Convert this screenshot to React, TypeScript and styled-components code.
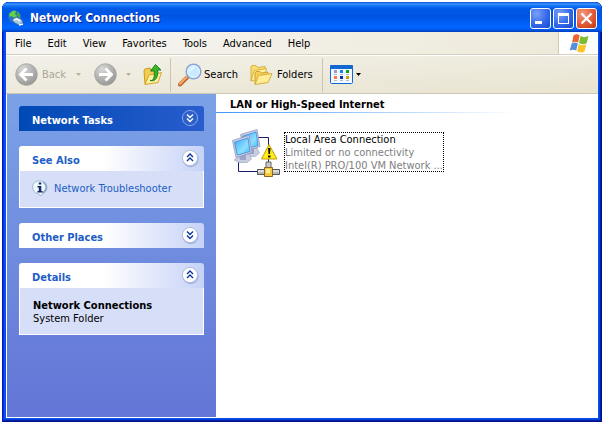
import React from "react";
import styled, { createGlobalStyle, css } from "styled-components";

const GlobalStyle = createGlobalStyle`
  * { box-sizing: border-box; }
  body {
    margin: 0;
    background: #fff;
    color: #000;
    font: 11px/13px "DejaVu Sans Condensed", "DejaVu Sans", sans-serif;
  }
  button {
    font: inherit;
    color: inherit;
    margin: 0;
    padding: 0;
    border: 0;
    background: none;
  }
  svg { display: block; flex: none; }
`;

const Page = styled.div`
  display: flex;
  min-height: 100vh;
  padding: 2px;
`;

const Window = styled.main`
  flex: 1;
  display: flex;
  flex-direction: column;
  min-width: 0;
  padding: 0 4px 4px;
  background: #0a50ee;
  border-radius: 7px 7px 0 0;
  box-shadow: inset 1px 0 #0019cf, inset -1px 0 #00138c, inset 0 -1px #00138c,
    inset 2px 0 #0831d9, inset -2px 0 #001ea0, inset 0 -2px #001ea0,
    inset -3px 0 #0441d8, inset 0 -3px #0441d8;
`;

const TitleBar = styled.header`
  display: flex;
  align-items: center;
  flex: none;
  height: 30px;
  margin: 0 -4px;
  padding: 2px 5px 0 6px;
  gap: 2px;
  border-radius: 7px 7px 0 0;
  background: linear-gradient(
    #0850d8 0, #3a94ff 2px, #1070f4 4px, #0058e6 7px, #0054e3 14px,
    #005cf4 20px, #0066ff 25px, #0060f8 27px, #0048d0 29px, #003dc0 30px
  );
`;

const WindowTitle = styled.h1`
  flex: 1;
  margin: 0 0 0 4px;
  font: bold 12px/16px "DejaVu Sans Condensed", "DejaVu Sans", sans-serif;
  color: #fff;
  text-shadow: 1px 1px #0b1f8c;
`;

const CaptionButton = styled.button<{ $close?: boolean }>`
  display: grid;
  place-items: center;
  width: 21px;
  height: 21px;
  border: 1px solid #fff;
  border-radius: 3px;
  background: ${(p) =>
    p.$close
      ? "radial-gradient(circle at 30% 25%, #f09a80, #e25a36 55%, #c03a10)"
      : "radial-gradient(circle at 30% 25%, #7ba0f8, #3468e8 55%, #1848d0)"};
`;

const Client = styled.div`
  flex: 1;
  display: flex;
  flex-direction: column;
  min-height: 0;
  background: #fff;
`;

const MenuRow = styled.div`
  display: flex;
  flex: none;
  height: 24px;
  border-bottom: 1px solid #fff;
  box-shadow: inset 0 -1px #d6d0bc;
  background: linear-gradient(90deg, #f6f5f3, #ede9d9);
`;

const MenuBar = styled.nav`
  flex: 1;
  display: flex;
  align-items: center;
  padding: 0 0 1px 9px;
  gap: 16px;
`;

const LogoCell = styled.div`
  display: grid;
  place-items: center;
  width: 40px;
  height: 22px;
  border-left: 1px solid #d0cab6;
  background: #fff;
`;

const ToolBar = styled.div`
  display: flex;
  align-items: center;
  flex: none;
  height: 38px;
  padding-left: 9px;
  border-bottom: 1px solid #cbc7b4;
  background: linear-gradient(#f0eee699, #e8e3cf99), linear-gradient(90deg, #f4f3ee, #ece6d2);
`;

const ToolButton = styled.button<{ $gap?: number; $after?: number }>`
  display: flex;
  align-items: center;
  height: 30px;
  gap: ${(p) => p.$gap ?? 4}px;
  margin-right: ${(p) => p.$after ?? 0}px;
  &:disabled { color: #aaa797; }
`;

const Separator = styled.span`
  width: 1px;
  height: 34px;
  background: #c9c5b2;
  margin-right: 7px;
`;

const Body = styled.div`
  flex: 1;
  display: flex;
  min-height: 0;
  padding: 0 0 1px 1px;
`;

const Sidebar = styled.aside`
  display: flex;
  flex-direction: column;
  flex: none;
  gap: 15px;
  width: 209px;
  padding: 12px;
  background: linear-gradient(#7ba2e7, #6375d6);
`;

const Panel = styled.section`
  display: flex;
  flex-direction: column;
`;

const PanelHeader = styled.button<{ $primary?: boolean }>`
  display: flex;
  align-items: center;
  justify-content: space-between;
  height: 25px;
  padding: 0 2px 0 13px;
  border-radius: 3px 3px 0 0;
  font-weight: bold;
  ${(p) =>
    p.$primary
      ? css`
          color: #fff;
          background: linear-gradient(90deg, #0049b5, #295dce);
        `
      : css`
          color: #215dc6;
          background: linear-gradient(90deg, #fff 45%, #c6d3f7);
        `}
`;

const PanelTitle = styled.span`
  padding-top: 3px;
`;

const PanelBody = styled.div<{ $roomy?: boolean }>`
  border: 1px solid #fff;
  border-top: 0;
  background: #d6dff7;
  padding: ${(p) => (p.$roomy ? "11px 12px 9px 13px" : "9px 12px 10px")};
`;

const TaskLink = styled.a`
  display: flex;
  align-items: center;
  gap: 6px;
  color: #215dc6;
  text-decoration: none;
  white-space: nowrap;
`;

const Strong = styled.div`
  font-weight: bold;
  white-space: nowrap;
`;

const Content = styled.section`
  flex: 1;
  min-width: 0;
`;

const GroupTitle = styled.h2`
  margin: 0;
  padding: 4px 14px 1px;
  font: inherit;
  font-weight: bold;
`;

const GroupRule = styled.div`
  height: 1px;
  max-width: 300px;
  background: linear-gradient(90deg, #3f96f8, #fff);
`;

const Connection = styled.button`
  display: flex;
  gap: 4px;
  margin: 15px 0 0 16px;
  text-align: left;
`;

const ConnectionText = styled.span`
  display: flex;
  flex-direction: column;
  width: 160px;
  height: 40px;
  margin-top: 4px;
  border: 1px dotted #000;
  white-space: nowrap;
  color: #808080;
`;

const Name = styled.span`
  color: #000;
`;

const Arrow = ({ dark }: { dark?: boolean }) => (
  <svg width="5" height="3" viewBox="0 0 5 3">
    <path d="M0 0H5L2.5 3Z" fill={dark ? "#000" : "#b5b2a2"} />
  </svg>
);

const RoundArrow = ({ forward }: { forward?: boolean }) => (
  <svg width="23" height="23" viewBox="0 0 23 23">
    <defs>
      <radialGradient id="disc" cx=".35" cy=".25" r=".8">
        <stop offset="0" stopColor="#d8d8d6" />
        <stop offset=".6" stopColor="#b0b0ae" />
        <stop offset="1" stopColor="#969694" />
      </radialGradient>
    </defs>
    <circle cx="11.5" cy="11.5" r="10.8" fill="url(#disc)" stroke="#a2a29e" strokeWidth=".8" />
    <path
      d={forward ? "M5 11.5H17M11.5 5.5L17.5 11.5L11.5 17.5" : "M18 11.5H6M11.5 5.5L5.5 11.5L11.5 17.5"}
      fill="none"
      stroke="#fff"
      strokeWidth="2.8"
    />
  </svg>
);

const UpFolder = () => (
  <svg width="20" height="24" viewBox="0 0 20 24">
    <path d="M1 8L2 6L7 5L8 7L14 6V19L2 21Z" fill="#f3ce55" stroke="#c89a20" />
    <path d="M2 21.5L6 12L18.5 9.5L15 19.5Z" fill="#fff0a0" stroke="#d5a628" />
    <path d="M7 17.5C11 18 11.5 14 11.3 8H7.5L12.5 1.500L18 7H14.8C15 14 13 19 7 17.5Z" fill="#37b528" stroke="#177c18" strokeWidth=".9" />
  </svg>
);

const Magnifier = () => (
  <svg width="24" height="24" viewBox="0 0 24 24">
    <path d="M2 21.5L9 14.5" stroke="#b8683a" strokeWidth="4" strokeLinecap="round" />
    <path d="M2 20.8L8.5 14" stroke="#ffab62" strokeWidth="2.2" strokeLinecap="round" />
    <circle cx="15.5" cy="8.5" r="7.3" fill="#b8e0fb" stroke="#8ba4d8" strokeWidth="1.5" />
    <circle cx="15.5" cy="8.5" r="5.8" fill="#c8eafe" stroke="#f4fbff" />
    <path d="M11.5 9C11.5 6 14 4 17 4.500C15 6 13 7 11.5 9Z" fill="#fff" />
  </svg>
);

const FoldersIcon = () => (
  <svg width="23" height="22" viewBox="0 0 23 22">
    <path d="M1 17V3L2 1.500H6L7.5 3.500L15 2.500V6L6 8Z" fill="#f8df70" stroke="#d8b040" />
    <path d="M1 17L4 6.500L16.5 4.500L14 14Z" fill="#fdf0a0" stroke="#d8b040" />
    <path d="M5 20V9L6 7.500H10L11.5 9L18 8V11Z" fill="#f3cf58" stroke="#d0a42c" />
    <path d="M5 20.5L8.5 11.5L22 9.500L18 18.5Z" fill="#feed94" stroke="#d8b040" />
  </svg>
);

const ViewsIcon = () => (
  <svg width="23" height="19" viewBox="0 0 23 19">
    <rect x=".5" y=".5" width="22" height="18" rx="1" fill="#f2f8ff" stroke="#1268d2" />
    <rect width="23" height="4" rx="1" fill="#1268d2" />
    <path d="M4 5h3v3H4z" fill="#9a98cc" />
    <path d="M10 5h3v3h-3z" fill="#0f84ee" />
    <path d="M16 5h3v3h-3z" fill="#10a018" />
    <path d="M4 11h3v3H4z" fill="#ff7848" />
    <path d="M10 11h3v3h-3z" fill="#0a30a0" />
    <path d="M16 11h3v3h-3z" fill="#d0a000" />
    <path d="M4 9.500h3M10 9.500h3M16 9.500h3M4 15.5h3M10 15.5h3M16 15.5h3" stroke="#b4bac6" />
  </svg>
);

const Flag = () => (
  <svg width="20" height="19" viewBox="0 0 20 19">
    <path d="M4.500 1.500C6.500 0 8.500 0 10.6 1.300L9.2 8.500C7 7.300 5 7.500 3 8.700Z" fill="#ee6430" />
    <path d="M11.5 2C14 3.500 16 3.500 19.5 2L17.6 9.200C15 10.5 12.5 10.5 10 9Z" fill="#7cbc30" />
    <path d="M2.700 9.500C5 8.200 7 8.200 8.900 9.400L7.200 16.6C5 15.400 3 15.400 .6 16.6Z" fill="#5590dc" />
    <path d="M9.800 10C12.2 11.5 14.5 11.5 17.3 10.3L15.5 17.5C13 19 10.5 18.5 8.100 17.2Z" fill="#fac428" />
  </svg>
);

const GlobeIcon = () => (
  <svg width="16" height="16" viewBox="0 0 16 16">
    <circle cx="6.500" cy="6.500" r="6.3" fill="#2a72c8" />
    <path d="M1 4L5 .8L8 1L7 4L9 6L6 8L4 6L2 7Z" fill="#62d443" />
    <path d="M9 1.500L12 4V8L9 6Z" fill="#3aae40" />
    <path d="M4 10L8 7L13 9L15 12L11 15L7 13Z" fill="#a8cce0" stroke="#466c98" strokeWidth=".8" />
    <path d="M6 10L9 9L12 11M11 15L15 14" stroke="#fff" strokeWidth="1.3" fill="none" />
  </svg>
);

const Chevron = ({ up, primary }: { up?: boolean; primary?: boolean }) => (
  <svg width="24" height="24" viewBox="0 0 24 24">
    <circle cx="12.5" cy="12" r="8.2" fill="#5a70b0" opacity={primary ? 0 : 0.35} />
    <circle cx="12" cy="11" r="7.6" fill={primary ? "#2f60c8" : "#fff"} stroke={primary ? "#83a6ec" : "#b2bfdd"} />
    <path
      d={up ? "M9 10L12 7L15 10M9 14L12 11L15 14" : "M9 7.500L12 10.5L15 7.500M9 11.5L12 14.5L15 11.5"}
      fill="none"
      stroke={primary ? "#fff" : "#0a349c"}
      strokeWidth="1.4"
    />
  </svg>
);

const InfoIcon = () => (
  <svg width="16" height="17" viewBox="0 0 16 17">
    <path d="M7.500 .8C12 .8 15 3.500 15 7.200C15 10.5 13 12.8 10.5 13.5L8.800 16L6 13.6C2.500 13 .6 10.5 .6 7.200C.6 3.500 3.500 .8 7.500 .8Z" fill="#eef9fd" stroke="#9fb6cc" />
    <path d="M11 2C15.5 5 15 11 10.5 13" fill="none" stroke="#86aac8" strokeWidth="1.6" />
    <path d="M6.800 2.500h2.500v2H6.800zM5.500 6h3.800v5h1.200v1.500H5.500V11h1.300V7.500H5.500z" fill="#16285e" />
  </svg>
);

const Computer = () => (
  <>
    <path d="M6 22L16 20L18.5 25L14 28.5H6L1 26Z" fill="#c8cce0" stroke="#a2a8c4" strokeWidth=".7" />
    <path d="M6 21H13V26H7Z" fill="#9da3c4" />
    <path d="M-.5 6.500L16 1.500L19 18.5L3 23.5Z" fill="#cdd3e8" stroke="#8f97b8" strokeWidth=".8" />
    <path d="M1.500 8.200L15 4L17 17.5L4.300 21Z" fill="url(#screen)" stroke="#3a88d8" strokeWidth=".8" />
  </>
);

const LanIcon = () => (
  <svg width="48" height="50" viewBox="0 0 48 50">
    <defs>
      <linearGradient id="screen" x1="0" y1="0" x2="1" y2="1">
        <stop offset="0" stopColor="#43a5f5" />
        <stop offset=".6" stopColor="#8be0ff" />
        <stop offset="1" stopColor="#49b6f7" />
      </linearGradient>
    </defs>
    <path d="M26 9.500H36.5V35M6.500 31V43.5H25" fill="none" stroke="#1c1c68" />
    <g transform="translate(9 0)"><Computer /></g>
    <g transform="translate(1 6)"><Computer /></g>
    <path d="M37 16.5L45 31H29.5Z" fill="#ffec18" stroke="#c39c10" />
    <path d="M36 20H38.5L38 26H36.5ZM36 27.5H38.5V29.5H36Z" fill="#111" />
    <path d="M34 34H39V40H34Z" fill="#c8c8c8" stroke="#666" />
    <path d="M25.5 41.5H47.5V46.5H25.5Z" fill="#b8bab8" stroke="#55585a" />
    <path d="M26 43H47" stroke="#fff" />
    <path d="M32.5 39.5H40.5V48.5H32.5Z" fill="#f8c83c" stroke="#8a6420" />
    <path d="M34 41H38V45H34Z" fill="#fff09a" />
  </svg>
);

const menus = ["File", "Edit", "View", "Favorites", "Tools", "Advanced", "Help"];

export default function App() {
  return (
    <Page>
      <GlobalStyle />
      <Window>
        <TitleBar>
          <GlobeIcon />
          <WindowTitle>Network Connections</WindowTitle>
          <CaptionButton aria-label="Minimize">
            <svg width="19" height="19"><path d="M4 12h7v3H4z" fill="#fff" /></svg>
          </CaptionButton>
          <CaptionButton aria-label="Maximize">
            <svg width="19" height="19"><path d="M4 4h11v11H4zM5 7v7h9V7z" fill="#fff" fillRule="evenodd" /></svg>
          </CaptionButton>
          <CaptionButton aria-label="Close" $close>
            <svg width="19" height="19"><path d="M4.500 4.500L14.5 14.5M14.5 4.500L4.500 14.5" stroke="#fff" strokeWidth="2.2" /></svg>
          </CaptionButton>
        </TitleBar>
        <Client>
          <MenuRow>
            <MenuBar>
              {menus.map((m) => <button key={m}>{m}</button>)}
            </MenuBar>
            <LogoCell><Flag /></LogoCell>
          </MenuRow>
          <ToolBar>
            <ToolButton disabled $after={10}><RoundArrow />Back</ToolButton>
            <ToolButton disabled aria-label="Back history" $after={13}><Arrow /></ToolButton>
            <ToolButton disabled aria-label="Forward" $after={9}><RoundArrow forward /></ToolButton>
            <ToolButton disabled aria-label="Forward history" $after={12}><Arrow /></ToolButton>
            <ToolButton aria-label="Up" $after={7}><UpFolder /></ToolButton>
            <Separator />
            <ToolButton $gap={2} $after={12}><Magnifier />Search</ToolButton>
            <ToolButton $after={9}><FoldersIcon />Folders</ToolButton>
            <Separator />
            <ToolButton aria-label="Views" $gap={3}><ViewsIcon /><Arrow dark /></ToolButton>
          </ToolBar>
          <Body>
            <Sidebar>
              <Panel>
                <PanelHeader $primary><PanelTitle>Network Tasks</PanelTitle><Chevron primary /></PanelHeader>
              </Panel>
              <Panel>
                <PanelHeader><PanelTitle>See Also</PanelTitle><Chevron up /></PanelHeader>
                <PanelBody>
                  <TaskLink href="#"><InfoIcon />Network Troubleshooter</TaskLink>
                </PanelBody>
              </Panel>
              <Panel>
                <PanelHeader><PanelTitle>Other Places</PanelTitle><Chevron /></PanelHeader>
              </Panel>
              <Panel>
                <PanelHeader><PanelTitle>Details</PanelTitle><Chevron up /></PanelHeader>
                <PanelBody $roomy>
                  <Strong>Network Connections</Strong>
                  <div>System Folder</div>
                </PanelBody>
              </Panel>
            </Sidebar>
            <Content>
              <GroupTitle>LAN or High-Speed Internet</GroupTitle>
              <GroupRule />
              <Connection>
                <LanIcon />
                <ConnectionText>
                  <Name>Local Area Connection</Name>
                  <span>Limited or no connectivity</span>
                  <span>Intel(R) PRO/100 VM Network ...</span>
                </ConnectionText>
              </Connection>
            </Content>
          </Body>
        </Client>
      </Window>
    </Page>
  );
}
